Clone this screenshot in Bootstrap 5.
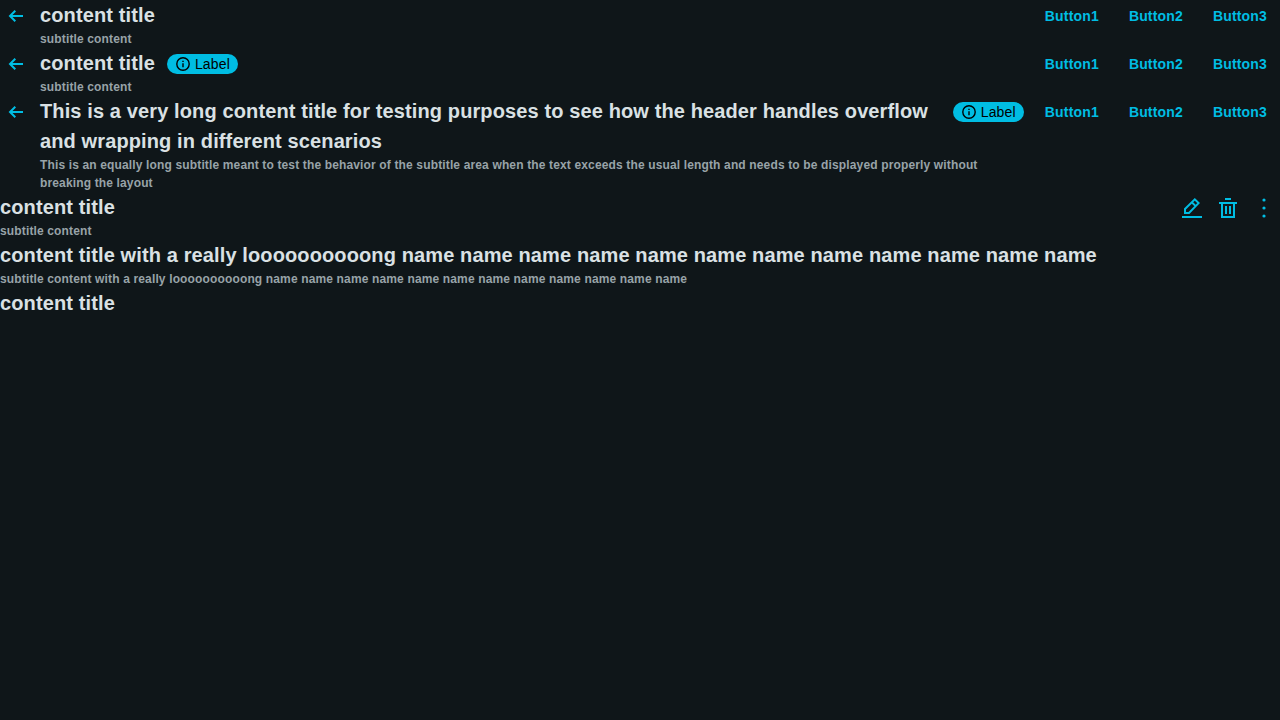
<!DOCTYPE html>
<html lang="en" data-bs-theme="dark">
<head>
<meta charset="utf-8">
<meta name="viewport" content="width=device-width, initial-scale=1">
<title>Content headers</title>
<link href="https://cdn.jsdelivr.net/npm/bootstrap@5.3.0/dist/css/bootstrap.min.css" rel="stylesheet">
<style>
body{background:#0f1619;font-family:"Liberation Sans",Arial,sans-serif;color:#dae1e4}
.square-btn{width:32px;height:32px;color:#00bde3;border:0;border-radius:4px}
.head-title{font-size:20px;line-height:30px;font-weight:700;letter-spacing:.006em;color:#dae1e4}
.head-sub{font-size:12px;line-height:18px;font-weight:700;letter-spacing:.012em;color:#98a3a8}
.text-btn{height:32px;padding:0 13px;color:#00bde3;font-size:14px;line-height:20px;font-weight:700;letter-spacing:.012em;border:0}
.pill{height:20px;padding:0 8px;background:#00bde3;color:#000;font-size:14px;line-height:20px;letter-spacing:.012em;border-radius:10px;margin:6px 0 0 12px}
.text-area{min-width:0}
svg{display:block;fill:currentColor}
</style>
</head>
<body>
<svg class="d-none">
<symbol id="arrow" viewBox="0 0 16 16"><path d="M7.3 2.7 2 8l5.3 5.3M2 8h13" fill="none" stroke="currentColor" stroke-width="2"/></symbol>
<symbol id="info" viewBox="0 0 16 16"><circle cx="8" cy="8" r="6.2" fill="none" stroke="currentColor" stroke-width="1.4"/><path d="M7.3 4.7h1.4v1.4H7.3zM7.3 7.3h1.4v4H7.3z"/></symbol>
<symbol id="edit" viewBox="0 0 24 24"><path d="M2 20h20v2H2z"/><path d="M5 17v-4L14.8 3.3 18.6 7.1 9 17zM11.8 6.2 15.7 10.1" fill="none" stroke="currentColor" stroke-width="2"/></symbol>
<symbol id="trash" viewBox="0 0 24 24"><path d="M9 2h6v2H9zM3 6h18v2h-2v14H5V8H3zM7 8v12h10V8zM9 10h2v8H9zM13 10h2v8h-2z" fill-rule="evenodd"/></symbol>
<symbol id="dots" viewBox="0 0 24 24"><circle cx="12" cy="4" r="1.6"/><circle cx="12" cy="12" r="1.6"/><circle cx="12" cy="20" r="1.6"/></symbol>
</svg>

<header class="d-flex align-items-start">
  <button class="btn square-btn p-2 me-2 flex-shrink-0" aria-label="Back"><svg width="16" height="16"><use href="#arrow"/></svg></button>
  <div class="text-area flex-grow-1 me-2">
    <h1 class="head-title mb-0">content title</h1>
    <p class="head-sub mb-0">subtitle content</p>
  </div>
  <div class="d-flex gap-1 flex-shrink-0"><button class="btn text-btn">Button1</button><button class="btn text-btn">Button2</button><button class="btn text-btn">Button3</button></div>
</header>

<header class="d-flex align-items-start">
  <button class="btn square-btn p-2 me-2 flex-shrink-0" aria-label="Back"><svg width="16" height="16"><use href="#arrow"/></svg></button>
  <div class="text-area flex-grow-1 me-2">
    <div class="d-flex align-items-start"><h1 class="head-title mb-0">content title</h1><span class="pill d-flex align-items-center gap-1 flex-shrink-0"><svg width="16" height="16"><use href="#info"/></svg>Label</span></div>
    <p class="head-sub mb-0">subtitle content</p>
  </div>
  <div class="d-flex gap-1 flex-shrink-0"><button class="btn text-btn">Button1</button><button class="btn text-btn">Button2</button><button class="btn text-btn">Button3</button></div>
</header>

<header class="d-flex align-items-start">
  <button class="btn square-btn p-2 me-2 flex-shrink-0" aria-label="Back"><svg width="16" height="16"><use href="#arrow"/></svg></button>
  <div class="text-area flex-grow-1 me-2">
    <div class="d-flex align-items-start"><h1 class="head-title mb-0">This is a very long content title for testing purposes to see how the header handles overflow and wrapping in different scenarios</h1><span class="pill d-flex align-items-center gap-1 flex-shrink-0"><svg width="16" height="16"><use href="#info"/></svg>Label</span></div>
    <p class="head-sub mb-0">This is an equally long subtitle meant to test the behavior of the subtitle area when the text exceeds the usual length and needs to be displayed properly without breaking the layout</p>
  </div>
  <div class="d-flex gap-1 flex-shrink-0"><button class="btn text-btn">Button1</button><button class="btn text-btn">Button2</button><button class="btn text-btn">Button3</button></div>
</header>

<header class="d-flex align-items-start">
  <div class="text-area flex-grow-1 me-2">
    <h1 class="head-title mb-0">content title</h1>
    <p class="head-sub mb-0">subtitle content</p>
  </div>
  <div class="d-flex gap-1 flex-shrink-0">
    <button class="btn square-btn p-1" aria-label="Edit"><svg width="24" height="24"><use href="#edit"/></svg></button>
    <button class="btn square-btn p-1" aria-label="Delete"><svg width="24" height="24"><use href="#trash"/></svg></button>
    <button class="btn square-btn p-1" aria-label="More"><svg width="24" height="24"><use href="#dots"/></svg></button>
  </div>
</header>

<header>
  <h1 class="head-title mb-0">content title with a really loooooooooong name name name name name name name name name name name name</h1>
  <p class="head-sub mb-0">subtitle content with a really loooooooooong name name name name name name name name name name name name</p>
</header>

<header>
  <h1 class="head-title mb-0">content title</h1>
</header>
</body>
</html>
